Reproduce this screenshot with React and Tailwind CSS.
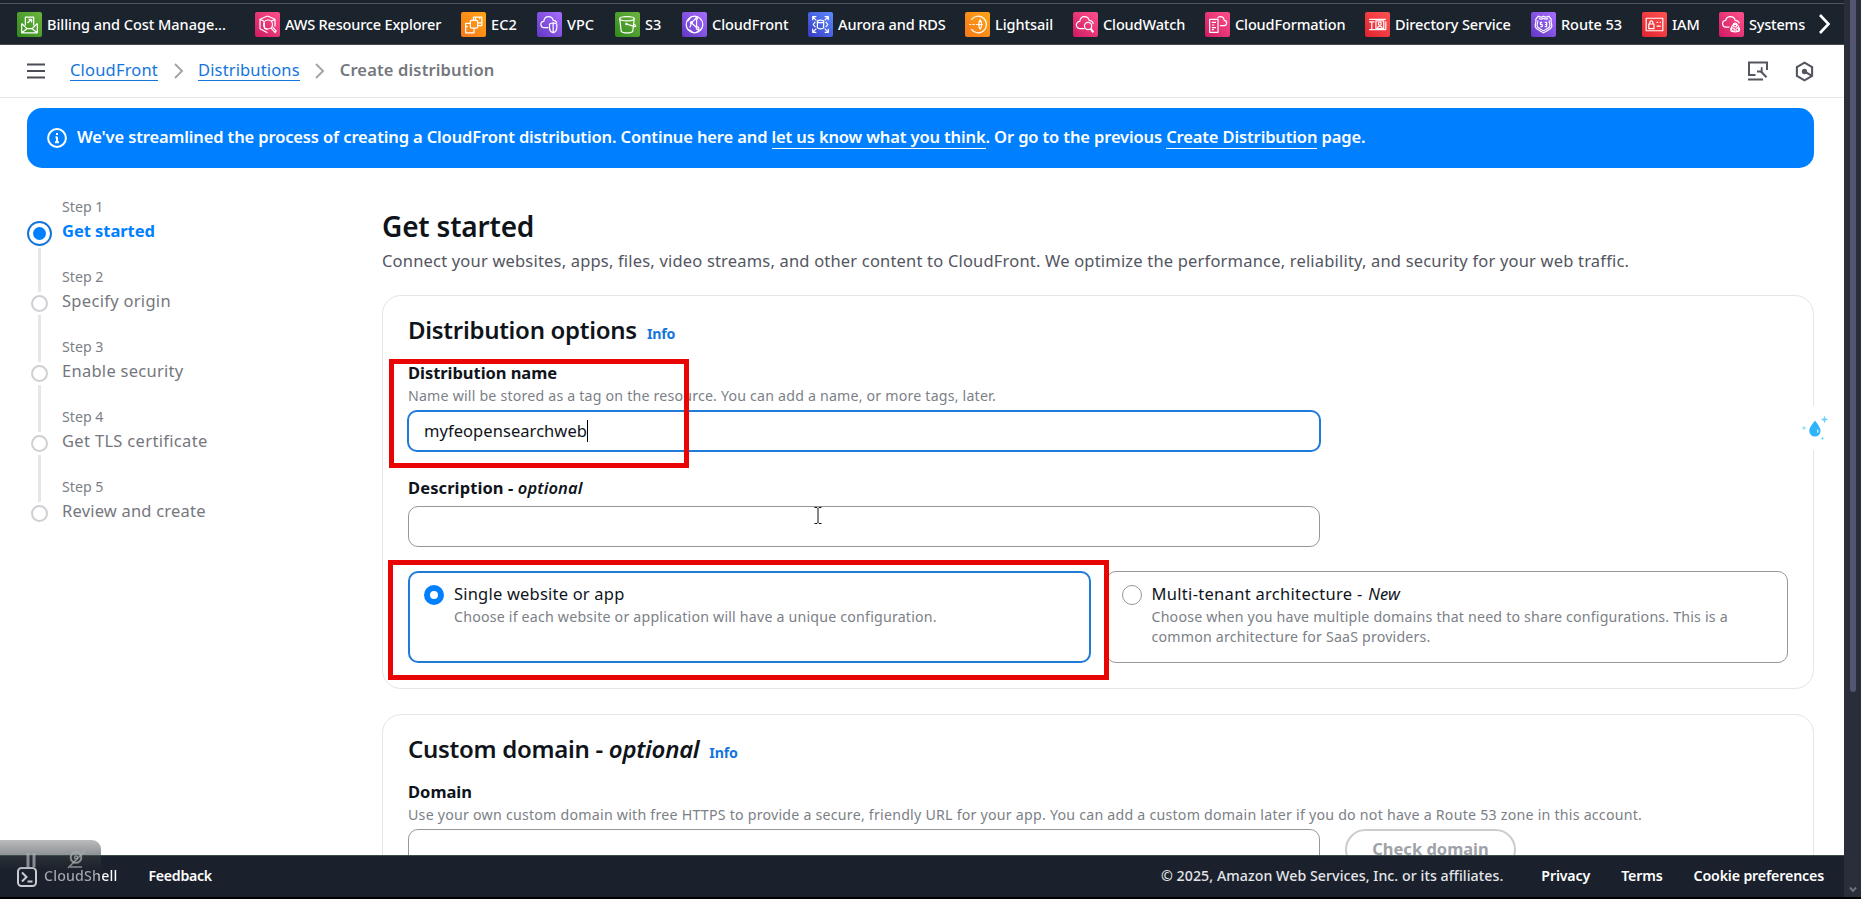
import React from "react";

const Glyph = {
  billing: (
    <>
      <path d="M4.5 11v9h15v-9M4.5 11l5 5h5l5-5M4.5 20l5-4M19.5 20l-5-4" />
      <path d="M8 13V5h8v8M10 10.5l4-3.5M11 7h3v3" />
    </>
  ),
  explorer: (
    <>
      <path d="M12 3.8l7.2 3.2v7M12 3.8L4.8 7v9l7.2 4M4.8 7l4 2M19.2 7l-3.7 2" />
      <circle cx="12.5" cy="12" r="4.3" />
      <path d="M15.3 15.2l4 4.6 1-1.6-3.5-4" />
      <path d="M9 10v5.5l3 1.5" />
    </>
  ),
  ec2: (
    <>
      <rect x="9" y="8" width="7" height="7.5" rx="1" />
      <path d="M12 8V5h8v8h-4M12.500 15.500v4.500h-8v-9H9M14 5v3M18 5v2M4.500 14h2M16 10.500h4" />
    </>
  ),
  vpc: (
    <>
      <path d="M11 15H7a3 3 0 0 1-.5-6C7 5.5 9 4.500 11 4.500c2.500 0 4 1.500 4.500 3.500 2 0 3 1 3.500 2.500" />
      <path d="M12 11.500l3.500-1.200 3.500 1.200v4c0 2-1.500 3.500-3.500 4.500-2-1-3.500-2.500-3.500-4.500zM15.500 10.500V20" />
    </>
  ),
  s3: (
    <>
      <ellipse cx="11.500" cy="6.500" rx="7" ry="2" />
      <path d="M4.500 6.500l1.500 12c1.500 2 9.500 2 11 0l1.500-12M11 11.500l8 2.500c1.500.3 1-1.500-1-2.500" />
      <circle cx="11" cy="11.500" r=".6" />
    </>
  ),
  cloudfront: (
    <>
      <circle cx="12" cy="12" r="8" />
      <path d="M9 10.500l4-4M9 10.800l-1.500 4M9.500 10.800l5 4.500M14 7v7.500M5 9c2-1 2-3 4-4.500M11 20c-2-2-3-3-6-3.500M14 19.500c1-2 3-2 4.500-3" />
      <circle cx="9" cy="10" r=".9" />
      <circle cx="14" cy="6" r=".9" />
      <circle cx="15" cy="15.500" r="1.200" />
    </>
  ),
  rds: (
    <>
      <ellipse cx="12" cy="9" rx="3" ry="1.200" />
      <path d="M9 9v6c.5 1.500 5.500 1.500 6 0V9M7 9.500L5 12l2 2.500M17 9.500l2 2.500-2 2.500" />
      <path d="M4.500 8V4.500H8M4.500 4.500L8 8M19.500 8V4.500H16M19.500 4.500L16 8M4.500 16v3.500H8M4.500 19.500L8 16M19.500 16v3.500H16M19.500 19.500L16 16" />
    </>
  ),
  lightsail: (
    <>
      <path d="M6 7.500a8 8 0 1 1 0 9" />
      <path d="M4 12h8M4 12h1" strokeDasharray="2 1.200" />
      <path d="M14.500 7.500c2 2.500 2 6.500 0 9-1.500-2.500-1.500-6.500 0-9zM12 12h5" />
    </>
  ),
  cloudwatch: (
    <>
      <path d="M11 16H7a3.500 3.500 0 0 1-.5-7C7 6 9 4.500 11 4.500c2.500 0 4 1.500 4.500 3.500 2 0 3.500 1.500 4 3.500" />
      <circle cx="14.500" cy="13.500" r="3.500" />
      <path d="M17 16l2.500 3.500" strokeWidth="2" />
    </>
  ),
  cloudformation: (
    <>
      <path d="M4.500 7h8v12.500h-8zM6.500 10h4M6.500 12.500h2.500M6.500 15h4M6.500 17h2" />
      <path d="M14.500 13h3.500a2.500 2.500 0 0 0 .5-5C18 5.500 16.500 4.500 15 4.500s-2.500.5-3 1.500" />
    </>
  ),
  directory: (
    <>
      <path d="M4 7h16M4 9.500h5M6.500 9.500V17M4 17h16M20 9v8" />
      <rect x="10.500" y="8.500" width="7.500" height="7.500" />
      <circle cx="14.200" cy="11.200" r="1.400" />
      <path d="M12 15.500c.5-2.500 4-2.500 4.500 0" />
    </>
  ),
  route53: (
    <>
      <path d="M12 4c1.500 1.200 3 1.200 5 0l2.500 3c-1 2 .5 4 .5 6.500 0 3-4 4-8 6.500-4-2.500-8-3.500-8-6.500C4 11 5.500 9 4.500 7L7 4c2 1.200 3.500 1.200 5 0z" />
      <path d="M12 6c-1.500 1-3 1-4.500.3M12 6c1.500 1 3 1 4.500.3M6.500 8c.3 2-.7 3.500-.7 5 0 2.500 3.200 3 6.200 5 3-2 6.200-2.500 6.200-5 0-1.500-1-3-.7-5" />
      <path d="M10.800 10H9v1.800h1.700v2.200H9M13.200 10h1.800v4h-1.800M13.500 12H15" />
    </>
  ),
  iam: (
    <>
      <rect x="4" y="6" width="16" height="12" />
      <rect x="6.500" y="11.500" width="5" height="4.500" />
      <path d="M7.500 11.500V10a1.500 1.500 0 0 1 3 0v1.500M14 10h1.500M17 10h1M14 13.500h4" />
    </>
  ),
  systems: (
    <>
      <path d="M10 14.500H7a3 3 0 0 1-.5-6.500C7 5.500 9 4.500 11 4.500c2.500 0 4 1.500 4.500 3.500 2 0 3.500 1 4 3" />
      <circle cx="15.500" cy="12.500" r="1.800" />
      <circle cx="13" cy="17" r="1.800" />
      <circle cx="18" cy="17" r="1.800" />
      <circle cx="15.500" cy="15.500" r="3.600" />
    </>
  ),
};

const GREEN = "bg-gradient-to-tr from-[#2f8a1c] to-[#6cb53f]";
const PINK = "bg-gradient-to-tr from-[#cf1763] to-[#ff4f8b]";
const ORANGE = "bg-gradient-to-tr from-[#f5781a] to-[#ffa514]";
const PURPLE = "bg-gradient-to-tr from-[#6236c4] to-[#a96dff]";
const BLUE = "bg-gradient-to-tr from-[#3a38c4] to-[#5c8aff]";
const RED = "bg-gradient-to-tr from-[#e0202f] to-[#ff5252]";

const SERVICES = [
  ["Billing and Cost Manage...", "billing", GREEN, "w-[238px] tracking-[-0.03px]"],
  ["AWS Resource Explorer", "explorer", PINK, "w-[206px] tracking-[-0.18px]"],
  ["EC2", "ec2", ORANGE, "w-[76px] tracking-[0.1px]"],
  ["VPC", "vpc", PURPLE, "w-[78px]"],
  ["S3", "s3", GREEN, "w-[67px]"],
  ["CloudFront", "cloudfront", PURPLE, "w-[126px] tracking-[-0.05px]"],
  ["Aurora and RDS", "rds", BLUE, "w-[157px] tracking-[-0.1px]"],
  ["Lightsail", "lightsail", ORANGE, "w-[108px] tracking-[-0.05px]"],
  ["CloudWatch", "cloudwatch", PINK, "w-[132px] tracking-[-0.12px]"],
  ["CloudFormation", "cloudformation", PINK, "w-[160px] tracking-[-0.12px]"],
  ["Directory Service", "directory", RED, "w-[166px] tracking-[-0.08px]"],
  ["Route 53", "route53", PURPLE, "w-[111px] tracking-[-0.04px]"],
  ["IAM", "iam", RED, "w-[77px] tracking-[-0.1px]"],
  ["Systems", "systems", PINK, "w-[99px] tracking-[-0.19px]"],
];

function ServiceBar() {
  return (
    <header className="flex h-[45px] shrink-0 flex-col border-b border-[#46494e] bg-[#1b232d]">
      <div className="h-1 shrink-0 border-b border-[#4f555d]" />
      <nav className="flex flex-1 items-center pl-[17px] text-white">
        {SERVICES.map(([name, icon, tone, cls]) => (
          <a key={name} className={`flex shrink-0 items-center gap-[5px] whitespace-nowrap text-[14.5px] leading-5 font-medium ${cls}`}>
            <span className={`flex size-[25px] shrink-0 items-center justify-center rounded-[2px] ${tone}`}>
              <svg viewBox="0 0 24 24" className="size-[25px]" fill="none" stroke="#fff" strokeWidth="1.15" strokeLinejoin="round">
                {Glyph[icon]}
              </svg>
            </span>
            {name}
          </a>
        ))}
        <svg viewBox="0 0 14 20" className="h-5 w-[14px]" fill="none" stroke="#fff" strokeWidth="2.6">
          <path d="M2 1l8.500 9L2 19" />
        </svg>
      </nav>
    </header>
  );
}

const Chevron = ({ className }) => (
  <svg viewBox="0 0 10 16" className={`h-4 w-[10px] ${className}`} fill="none" stroke="#a3a4a8" strokeWidth="1.900">
    <path d="M1 1l7 7-7 7" />
  </svg>
);

function Breadcrumbs() {
  return (
    <div className="flex h-[53px] shrink-0 items-center border-b border-[#e6e7ea] pb-[2px] pl-[27px] text-[16.5px] leading-5">
      <svg viewBox="0 0 18 16" className="mt-px h-4 w-[18px]" stroke="#4a4d55" strokeWidth="2">
        <path d="M0 1.500h18M0 8h18M0 14.500h18" />
      </svg>
      <a className="ml-[25px] border-b border-[#1475dc] tracking-[0.18px] text-[#1475dc]">CloudFront</a>
      <Chevron className="ml-4 mt-[2px]" />
      <a className="ml-[14px] border-b border-[#1475dc] tracking-[0.14px] text-[#1475dc]">Distributions</a>
      <Chevron className="ml-[15px] mt-[2px]" />
      <span className="ml-[15px] font-semibold tracking-[0.15px] text-[#75777d]">Create distribution</span>
      <div className="ml-auto flex items-center gap-[26px] pr-[30px] pt-[2px]">
        <svg viewBox="0 0 22 20" className="h-5 w-[22px]" fill="none" stroke="#53565f" strokeWidth="2">
          <path d="M8.500 14H2V1.500h18V9M1 18.500h15M13.500 10l6 6.300" />
          <path d="M14.700 6.200v4.300H10" strokeWidth="1.800" />
        </svg>
        <svg viewBox="0 0 20 22" className="h-[21px] w-[19px]" fill="none" stroke="#53565f" strokeWidth="2.200">
          <path d="M10 1.700l8 4.600v9.400l-8 4.600-8-4.600V6.300zM10 11l7 4" />
          <circle cx="10" cy="11" r="1.700" fill="#53565f" />
        </svg>
      </div>
    </div>
  );
}

function Banner() {
  return (
    <div className="mr-[30px] ml-[27px] mt-[10px] flex h-[60px] shrink-0 items-center rounded-[15px] bg-[#0080ff] pb-[3px] pl-5 text-white">
      <svg viewBox="0 0 20 20" className="mt-[2px] size-5" fill="none" stroke="#fff" strokeWidth="2">
        <circle cx="10" cy="10" r="8.900" />
        <path d="M10 5v2M10 8.700v6M8.500 9.300H10M8 14.200h4" />
      </svg>
      <p className="ml-[10px] whitespace-pre text-[16.5px] leading-5 font-semibold tracking-[-0.13px]">
        We've streamlined the process of creating a CloudFront distribution. Continue here and{" "}
        <a className="border-b border-white">let us know what you think</a>. Or go to the previous{" "}
        <a className="border-b border-white">Create Distribution</a> page.
      </p>
    </div>
  );
}

const STEPS = [
  ["Get started", "tracking-[-0.05px]"],
  ["Specify origin", "tracking-[0.3px]"],
  ["Enable security", "tracking-[0.27px]"],
  ["Get TLS certificate", "tracking-[0.33px]"],
  ["Review and create", "tracking-[0.2px]"],
];

function Steps() {
  return (
    <ol className="w-[355px] shrink-0 pt-[27px]">
      {STEPS.map(([title, track], i) => (
        <li key={title} className="flex h-[70px] gap-[10px]">
          <div className="flex w-[25px] flex-col items-center">
            <div className={`flex shrink-0 flex-col items-center ${i ? "h-[30px]" : "h-[26px]"}`}>
              {i > 0 && <div className="h-[27px] w-[3px] bg-[#e4e6ea]" />}
            </div>
            {i === 0 ? (
              <div className="flex size-[25px] shrink-0 items-center justify-center rounded-full border-2 border-[#1475dc]">
                <div className="size-[13px] rounded-full bg-[#0080ff]" />
              </div>
            ) : (
              <div className="size-[17px] shrink-0 rounded-full border-2 border-[#cfd0d3]" />
            )}
            {i < 4 && <div className={i ? "mt-[3px] w-[3px] flex-1 bg-[#e4e6ea]" : "mt-[2px] w-[3px] flex-1 bg-[#e4e6ea]"} />}
          </div>
          <div>
            <div className="text-[14.2px] leading-6 text-[#7c7f87]">Step {i + 1}</div>
            <div className={`text-[16.5px] leading-6 ${track} ${i ? "text-[#75777d]" : "font-bold text-[#0080ff]"}`}>{title}</div>
          </div>
        </li>
      ))}
    </ol>
  );
}

const Info = () => <a className="ml-[10px] text-[14.2px] leading-none font-bold tracking-[-0.2px] text-[#1475dc]">Info</a>;
const Label = ({ children, className = "" }) => (
  <div className={`text-[16.5px] leading-6 font-bold text-[#0f141a] ${className}`}>{children}</div>
);
const Hint = ({ children, className = "mt-px leading-[19px]" }) => (
  <div className={`whitespace-nowrap text-[14.2px] text-[#7c7f87] ${className}`}>{children}</div>
);
const CardTitle = ({ children }) => (
  <h2 className="h-8 whitespace-nowrap text-[24px] leading-8 font-semibold tracking-[-0.29px] text-[#0f141a]">{children}</h2>
);

function OptionsCard() {
  return (
    <section className="relative h-[394px] rounded-[19px] border border-[#e4e5e8] px-[25px] pt-[18px]">
      <CardTitle>
        Distribution options
        <Info />
      </CardTitle>
      <Label className="mt-[15px] tracking-[-0.05px]">Distribution name</Label>
      <Hint className="mt-px leading-[19px] tracking-[0.19px]">Name will be stored as a tag on the resource. You can add a name, or more tags, later.</Hint>
      <div className="-ml-px mt-[5px] flex h-[42px] w-[914px] items-center rounded-[10px] border-2 border-[#1f7ad8] pl-[15px] text-[16.5px] tracking-[0.06px] text-[#0f141a]">
        myfeopensearchweb
        <span className="h-[22px] w-px bg-black" />
      </div>
      <Label className="mt-6 tracking-[0.1px]">
        Description - <i className="font-semibold">optional</i>
      </Label>
      <div className="mt-[6px] h-[41px] w-[912px] rounded-[10px] border border-[#95979c]" />
      <div className="mt-6 grid h-[92px] grid-cols-2 gap-[15px]">
        <div className="flex rounded-[10px] border-2 border-[#1f7ad8] pl-[14px] pt-[10px]">
          <div className="mt-[2px] size-5 shrink-0 rounded-full border-[6px] border-[#0080ff]" />
          <div className="ml-[10px]">
            <div className="text-[16.5px] leading-[22px] tracking-[0.2px] text-[#0f141a]">Single website or app</div>
            <Hint className="mt-[2px] leading-5 tracking-[0.2px]">Choose if each website or application will have a unique configuration.</Hint>
          </div>
        </div>
        <div className="flex rounded-[10px] border border-[#95979c] pl-[15px] pt-[11px]">
          <div className="mt-[2px] size-5 shrink-0 rounded-full border border-[#95979c]" />
          <div className="ml-[10px]">
            <div className="text-[16.5px] leading-[22px] tracking-[0.3px] text-[#0f141a]">
              Multi-tenant architecture - <i className="ml-px tracking-[0.2px]">New</i>
            </div>
            <Hint className="mt-[2px] leading-5 tracking-[0.19px]">
              Choose when you have multiple domains that need to share configurations. This is a
              <br />
              common architecture for SaaS providers.
            </Hint>
          </div>
        </div>
      </div>
      <div className="absolute left-[6px] top-[63px] h-[109px] w-[300px] border-[5px] border-[#ea0505]" />
      <div className="absolute left-[5px] top-[264px] h-[120px] w-[721px] border-[5px] border-[#ea0505]" />
      <svg viewBox="0 0 8 17" className="absolute left-[431px] top-[211px] h-[17px] w-2" fill="none" stroke="#111">
        <path d="M.5.500h2.500l1 1 1-1h2.500M4 1.500v14M.5 16.500h2.500l1-1 1 1h2.500" />
      </svg>
    </section>
  );
}

function DomainCard() {
  return (
    <section className="mt-[25px] h-[260px] rounded-[19px] border border-[#e4e5e8] px-[25px] pt-[18px]">
      <CardTitle>
        Custom domain - <i>optional</i>
        <Info />
      </CardTitle>
      <Label className="mt-[15px]">Domain</Label>
      <Hint className="mt-px leading-[19px] tracking-[0.23px]">
        Use your own custom domain with free HTTPS to provide a secure, friendly URL for your app. You can add a custom domain later if you do not have a Route 53 zone in this account.
      </Hint>
      <div className="mt-[5px] flex gap-[25px]">
        <div className="h-[41px] w-[912px] rounded-[10px] border border-[#95979c]" />
        <button className="h-[41px] w-[171px] rounded-full border-2 border-[#cbccce] pb-[2px] text-[16.5px] leading-5 font-bold text-[#9fa2a8]">Check domain</button>
      </div>
    </section>
  );
}

function Footer() {
  return (
    <footer className="flex h-[42px] shrink-0 items-center border-t border-[#3c4a4c] bg-[#1b212c] pb-px pl-[17px] pr-[20px] text-[14.2px] leading-5 font-semibold text-white">
      <svg viewBox="0 0 20 20" className="mt-px size-5" fill="none" stroke="#c9ccd1" strokeWidth="2">
        <rect x="1" y="1" width="18" height="18" rx="3.500" />
        <path d="M5 5.500l4.500 4.500L5 14.500M10.500 14.500h5" />
      </svg>
      <a className="ml-[7px] bg-gradient-to-r from-[#a4a8ad] from-70% to-white to-80% bg-clip-text font-medium tracking-[0.18px] text-transparent">CloudShell</a>
      <a className="ml-[31px] tracking-[-0.3px]">Feedback</a>
      <span className="ml-auto font-medium tracking-[0.05px] text-[#e3e5e8]">© 2025, Amazon Web Services, Inc. or its affiliates.</span>
      <a className="ml-[38px] tracking-[-0.15px]">Privacy</a>
      <a className="ml-[31px] tracking-[-0.15px]">Terms</a>
      <a className="ml-[31px] tracking-[-0.15px]">Cookie preferences</a>
    </footer>
  );
}

function RecorderWidget() {
  return (
    <>
      <div className="absolute left-0 top-[840px] h-[15px] w-[101px] rounded-tr-[9px] bg-gradient-to-b from-[#b9bbbd] to-[#8f9395]" />
      <div className="absolute left-0 top-[856px] h-[14px] w-[101px] bg-gradient-to-b from-[#2a3136] to-[#1b212c]/0" />
      <svg viewBox="0 0 101 30" className="absolute left-0 top-[849px] h-[30px] w-[101px]" fill="none" stroke="#a9adb0" strokeOpacity=".75">
        <path d="M28 4v14M34 4v14" strokeWidth="3" />
        <circle cx="76" cy="8.500" r="5.300" strokeWidth="2" />
        <circle cx="76" cy="8.500" r="1.500" strokeWidth="1.500" />
        <path d="M68 19L85 2M70 18h12" strokeWidth="1.600" />
      </svg>
    </>
  );
}

function Droplet() {
  return (
    <div className="absolute left-[1797px] top-[406px] flex h-[44px] w-[38px] items-center justify-center bg-white">
      <svg viewBox="0 0 28 28" className="size-7" fill="#2db4fb">
        <path d="M13 6.500c2 3 5.500 6.500 5.500 10.500a5.600 5.600 0 0 1-11.200 0C7.300 13 11 9.500 13 6.500z" />
        <path d="M15.500 15c1.500 1 1.500 3 .2 4.200-.8-1.400-.8-2.900-.2-4.200z" fill="#d5f1ff" />
        <path d="M22.500 1.500l1 3 3 1-3 1-1 3-1-3-3-1 3-1zM2 11.500l.6 1.900 1.900.6-1.900.6L2 16.500l-.6-1.900-1.900-.6 1.900-.6zM20.500 22.500l.5 1.500 1.500.5-1.500.5-.5 1.500-.5-1.500-1.500-.5 1.500-.5z" fill="#6fd0f8" />
      </svg>
    </div>
  );
}

export default function App() {
  return (
    <div className="relative flex h-[899px] w-[1861px] flex-col overflow-hidden bg-black font-['Noto_Sans',sans-serif]">
      <div className="flex h-[897px]">
        <div className="flex w-[1844px] flex-col bg-white">
          <div className="flex min-h-0 flex-1 flex-col overflow-hidden">
            <ServiceBar />
            <Breadcrumbs />
            <Banner />
            <div className="flex pl-[27px]">
              <Steps />
              <main className="w-[1432px]">
                <h1 className="mt-[41px] text-[28px] leading-[34px] font-semibold tracking-[-0.2px] text-[#0f141a]">Get started</h1>
                <p className="mb-[21px] mt-[6px] whitespace-nowrap pb-px text-[16.5px] leading-6 tracking-[0.186px] text-[#53565f]">
                  Connect your websites, apps, files, video streams, and other content to CloudFront. We optimize the performance, reliability, and security for your web traffic.
                </p>
                <OptionsCard />
                <DomainCard />
              </main>
            </div>
          </div>
          <Footer />
        </div>
        <div className="flex w-[17px] flex-col items-center justify-between bg-[#2a2e3b]">
          <div className="h-[692px] w-[6px] rounded-b-full bg-[#525670]" />
          <svg viewBox="0 0 8 8" className="mb-[3px] size-2" fill="none" stroke="#6e7280" strokeWidth="2">
            <path d="M1 1.500l3 3.500 3-3.500" />
          </svg>
        </div>
      </div>
      <Droplet />
      <RecorderWidget />
    </div>
  );
}
